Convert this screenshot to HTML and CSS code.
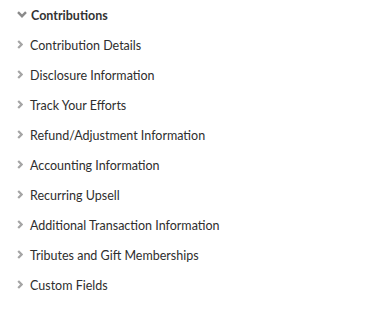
FILE: index.html
```html
<!DOCTYPE html>
<html>
<head>
<meta charset="utf-8">
<link rel="stylesheet" href="styles.css">
</head>
<body>
<div class="tree">
  <div class="row head">
    <svg class="chev-down" width="10" height="7" viewBox="0 0 10 7"><path d="M1 1.2 L5 5.2 L9 1.2" fill="none" stroke="#8a8a8a" stroke-width="2.4"/></svg>
    <span>Contributions</span>
  </div>
  <div class="row"><svg class="chev" width="6" height="9" viewBox="0 0 6 9"><path d="M1.2 1 L4.6 4.5 L1.2 8" fill="none" stroke="#a5a5a5" stroke-width="2.2"/></svg><span>Contribution Details</span></div>
  <div class="row"><svg class="chev" width="6" height="9" viewBox="0 0 6 9"><path d="M1.2 1 L4.6 4.5 L1.2 8" fill="none" stroke="#a5a5a5" stroke-width="2.2"/></svg><span>Disclosure Information</span></div>
  <div class="row"><svg class="chev" width="6" height="9" viewBox="0 0 6 9"><path d="M1.2 1 L4.6 4.5 L1.2 8" fill="none" stroke="#a5a5a5" stroke-width="2.2"/></svg><span>Track Your Efforts</span></div>
  <div class="row"><svg class="chev" width="6" height="9" viewBox="0 0 6 9"><path d="M1.2 1 L4.6 4.5 L1.2 8" fill="none" stroke="#a5a5a5" stroke-width="2.2"/></svg><span>Refund/Adjustment Information</span></div>
  <div class="row"><svg class="chev" width="6" height="9" viewBox="0 0 6 9"><path d="M1.2 1 L4.6 4.5 L1.2 8" fill="none" stroke="#a5a5a5" stroke-width="2.2"/></svg><span>Accounting Information</span></div>
  <div class="row"><svg class="chev" width="6" height="9" viewBox="0 0 6 9"><path d="M1.2 1 L4.6 4.5 L1.2 8" fill="none" stroke="#a5a5a5" stroke-width="2.2"/></svg><span>Recurring Upsell</span></div>
  <div class="row"><svg class="chev" width="6" height="9" viewBox="0 0 6 9"><path d="M1.2 1 L4.6 4.5 L1.2 8" fill="none" stroke="#a5a5a5" stroke-width="2.2"/></svg><span>Additional Transaction Information</span></div>
  <div class="row"><svg class="chev" width="6" height="9" viewBox="0 0 6 9"><path d="M1.2 1 L4.6 4.5 L1.2 8" fill="none" stroke="#a5a5a5" stroke-width="2.2"/></svg><span>Tributes and Gift Memberships</span></div>
  <div class="row"><svg class="chev" width="6" height="9" viewBox="0 0 6 9"><path d="M1.2 1 L4.6 4.5 L1.2 8" fill="none" stroke="#a5a5a5" stroke-width="2.2"/></svg><span>Custom Fields</span></div>
</div>
</body>
</html>
```

FILE: styles.css
```css
html, body {
  margin: 0;
  padding: 0;
  background: #fff;
}
body {
  font-family: "Lato", "Liberation Sans", sans-serif;
  font-size: 12.5px;
  color: #2e2e2e;
}
.tree {
  display: flex;
  flex-direction: column;
}
.row {
  display: flex;
  align-items: center;
  height: 30px;
  padding-left: 17px;
}
.row .chev {
  margin-right: 7px;
  margin-top: -1px;
}
.head {
  font-weight: bold;
  color: #333;
}
.head .chev-down {
  margin-right: 4px;
  margin-top: -1px;
}
```
